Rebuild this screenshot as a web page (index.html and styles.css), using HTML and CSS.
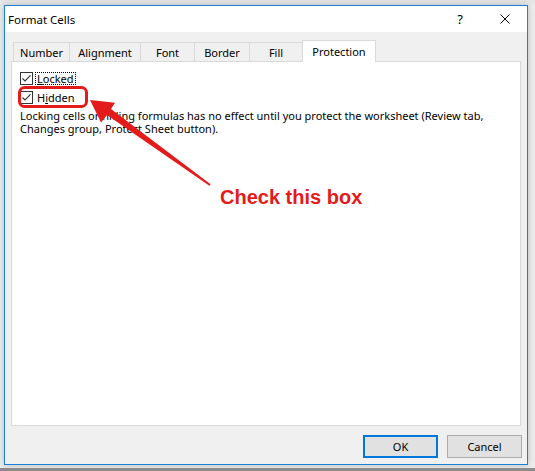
FILE: index.html
```html
<!DOCTYPE html>
<html lang="en">
<head>
<meta charset="utf-8">
<title>Format Cells</title>
<link rel="stylesheet" href="styles.css">
</head>
<body>
<div class="screen">
  <div class="window">
    <div class="titlebar">
      <span class="title">Format Cells</span>
      <span class="tb-btn help">?</span>
      <span class="tb-btn close">
        <svg width="10" height="10" viewBox="0 0 10 10"><path d="M0.5 0.5L9.5 9.5M9.5 0.5L0.5 9.5" stroke="#000" stroke-width="1" fill="none"/></svg>
      </span>
    </div>
    <div class="content">
      <div class="tabs">
        <div class="tab t-number">Number</div>
        <div class="tab t-alignment">Alignment</div>
        <div class="tab t-font">Font</div>
        <div class="tab t-border">Border</div>
        <div class="tab t-fill">Fill</div>
        <div class="tab t-protection active">Protection</div>
      </div>
      <div class="panel">
        <div class="checks">
          <div class="check-row">
            <svg class="box" width="13" height="13" viewBox="0 0 13 13"><rect x="0.5" y="0.5" width="12" height="12" fill="#fff" stroke="#333"/><polyline points="2.5,6.5 5,9 10.5,3.3" fill="none" stroke="#333" stroke-width="1.1"/></svg>
            <span class="label focus"><u>L</u>ocked</span>
          </div>
          <div class="check-row">
            <svg class="box" width="13" height="13" viewBox="0 0 13 13"><rect x="0.5" y="0.5" width="12" height="12" fill="#fff" stroke="#333"/><polyline points="2.5,6.5 5,9 10.5,3.3" fill="none" stroke="#333" stroke-width="1.1"/></svg>
            <span class="label">H<u>i</u>dden</span>
          </div>
        </div>
        <p class="note">Locking cells or hiding formulas has no effect until you protect the worksheet (Review tab, Changes group, Protect Sheet button).</p>
      </div>
      <div class="buttons">
        <button class="btn default">OK</button>
        <button class="btn">Cancel</button>
      </div>
    </div>
  </div>
  <div class="edge"></div>

  <svg class="annotation" width="535" height="471" viewBox="0 0 535 471">
    <rect x="19.5" y="87.5" width="67" height="19" rx="5" ry="5" fill="none" stroke="#e41b1b" stroke-width="3"/>
    <polygon points="90,100 115,102.7 111,109 210.6,184.2 209.4,185.8 107,115 101,122.5" fill="#e41b1b"/>
  </svg>
  <div class="callout">Check this box</div>
</div>
</body>
</html>
```

FILE: styles.css
```css
html, body {
  margin: 0;
  padding: 0;
}

body {
  font-family: "Noto Sans", sans-serif;
  font-size: 11px;
  color: #000;
  background: #e9e9e9;
}

.screen {
  position: relative;
  width: 535px;
  height: 471px;
  overflow: hidden;
  display: flex;
  flex-direction: column;
  background: linear-gradient(#e4e4e4, #ececec 8px);
}

.window {
  margin: 5px 7px 0 4px;
  width: 524px;
  height: 460px;
  box-sizing: border-box;
  border: 1px solid #1a80d6;
  background: #f0f0f0;
  display: flex;
  flex-direction: column;
  box-shadow: 0 0 6px rgba(0, 0, 0, 0.22);
}

.titlebar {
  height: 26px;
  flex: none;
  background: #fff;
  display: flex;
  align-items: center;
}

.title {
  flex: 1;
  padding-left: 3px;
  font-size: 11.5px;
}

.tb-btn {
  height: 26px;
  display: flex;
  align-items: center;
  justify-content: center;
}

.help {
  width: 46px;
  font-size: 13px;
}

.close {
  width: 44px;
}

.close svg {
  display: block;
}

.content {
  flex: 1;
  display: flex;
  flex-direction: column;
  padding: 8px 6px 6px 6px;
}

.tabs {
  display: flex;
  align-items: flex-end;
  height: 21px;
  margin-left: 2px;
  flex: none;
}

.tab {
  box-sizing: border-box;
  height: 19px;
  padding-top: 1px;
  line-height: 17px;
  border: 1px solid #d9d9d9;
  border-bottom: none;
  margin-left: -1px;
  text-align: center;
  white-space: nowrap;
}

.t-number { width: 57px; margin-left: 0; }
.t-alignment { width: 72px; }
.t-font { width: 55px; }
.t-border { width: 56px; }
.t-fill { width: 54px; }
.t-protection { width: 74px; }

.tab.active {
  height: 22px;
  padding-top: 0;
  line-height: 21px;
  margin-bottom: -1px;
  background: #fff;
  position: relative;
  z-index: 1;
}

.panel {
  height: 365px;
  flex: none;
  box-sizing: border-box;
  border: 1px solid #d9d9d9;
  background: #fff;
  padding: 10px 8px 0 8px;
}

.checks {
  display: flex;
  flex-direction: column;
  gap: 6px;
}

.check-row {
  display: flex;
  align-items: center;
  height: 13px;
}

.box {
  display: block;
  flex: none;
}

.label {
  margin-left: 2px;
  padding: 0 1px;
  height: 13px;
  box-sizing: border-box;
  line-height: 11px;
  border: 1px dotted transparent;
}

.label.focus {
  border-color: #000;
}

.label u {
  text-decoration-thickness: 1px;
  text-underline-offset: 1px;
}

.note {
  margin: 5px 0 0;
  line-height: 13px;
}

.buttons {
  display: flex;
  justify-content: flex-end;
  gap: 9px;
  margin-top: 9px;
  margin-right: -1px;
}

.btn {
  width: 75px;
  height: 23px;
  box-sizing: border-box;
  padding: 0;
  border: 1px solid #adadad;
  background: #e1e1e1;
  font-family: inherit;
  font-size: 11px;
  color: #000;
}

.btn.default {
  border: 2px solid #0078d7;
}

.edge {
  margin-top: auto;
  height: 3px;
  background: #8c8c8c;
}

.annotation {
  position: absolute;
  left: 0;
  top: 0;
  pointer-events: none;
}

.callout {
  position: absolute;
  left: 220px;
  top: 187px;
  font-family: "Liberation Sans", Arial, sans-serif;
  font-weight: bold;
  font-size: 20px;
  line-height: 20px;
  color: #e41b1b;
  white-space: nowrap;
}
```
